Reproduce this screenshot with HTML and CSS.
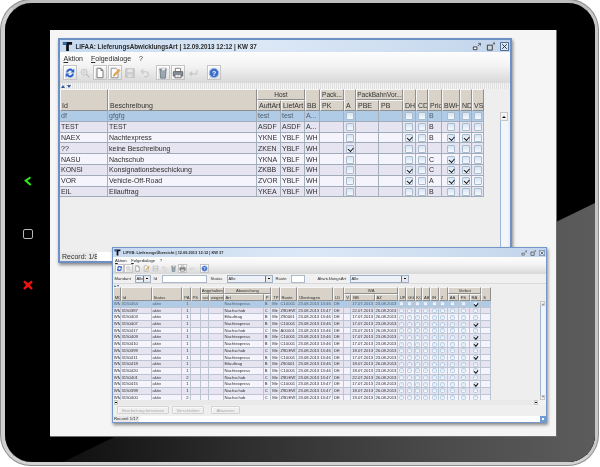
FILE: index.html
```html
<!DOCTYPE html>
<html lang="de">
<head>
<meta charset="utf-8">
<title>LIFAA</title>
<link rel="stylesheet" href="styles.css">
</head>
<body>
<svg class="sprite" xmlns="http://www.w3.org/2000/svg">
  <symbol id="i-logo" viewBox="0 0 12 12"><path d="M1 1h10v3H7.500v7H4.500V4H1z" fill="#111"/><path d="M1 1h4v3H1z" fill="#2f6fb5"/></symbol>
  <symbol id="i-refresh" viewBox="0 0 14 14"><path d="M2.500 6.500A4.500 4.500 0 0 1 10.500 3.500L12 2v4.500H7.500L9.200 5A2.800 2.800 0 0 0 4.500 6.500z" fill="#2a60c9"/><path d="M11.500 7.500A4.500 4.500 0 0 1 3.500 10.500L2 12V7.500h4.500L4.800 9A2.800 2.800 0 0 0 9.500 7.500z" fill="#2a60c9"/></symbol>
  <symbol id="i-zoom" viewBox="0 0 14 14"><circle cx="6" cy="6" r="3.500" fill="#e4e4e4" stroke="#c2c2c2"/><path d="M8.500 8.500l3.500 3.500" stroke="#c2c2c2" stroke-width="1.600"/><path d="M4.500 6h3M6 4.500v3" stroke="#cfcfcf"/></symbol>
  <symbol id="i-doc" viewBox="0 0 14 14"><path d="M3.500 1.500h4.500l2.500 2.500v8.500h-7z" fill="#fff" stroke="#666"/><path d="M8 1.500V4h2.500" fill="none" stroke="#666"/></symbol>
  <symbol id="i-edit" viewBox="0 0 14 14"><path d="M2.500 1.500h5.500l2.500 2.500v8.500h-8z" fill="#fdfdfd" stroke="#888"/><path d="M5 11l1-3 5.500-5.500 1.500 1.500-5.500 5.500z" fill="#e9b04a" stroke="#c9703c" stroke-width=".5"/></symbol>
  <symbol id="i-save" viewBox="0 0 14 14"><path d="M2 2h10v10H2z" fill="#cccccc" stroke="#bcbcbc"/><path d="M4 2.500h6v3.500H4z" fill="#e6e6e6"/><path d="M4.500 8.500h5V12h-5z" fill="#e0e0e0"/></symbol>
  <symbol id="i-undo" viewBox="0 0 14 14"><path d="M5 2.500L2.500 5.500 5.500 8M3 5.500h5a3 3 0 0 1 0 6H6" fill="none" stroke="#c8c8c8" stroke-width="1.300"/></symbol>
  <symbol id="i-trash" viewBox="0 0 14 14"><path d="M3.500 3.500h7l-.8 9.500H4.300z" fill="#9aa8b6" stroke="#6b7a7a"/><path d="M2.500 2.500h9" stroke="#666" stroke-width="1.200"/><path d="M5.500 1.200h4v3h-4z" fill="#f4f4f4" stroke="#999" stroke-width=".5"/></symbol>
  <symbol id="i-print" viewBox="0 0 14 14"><path d="M4 1.500h6v4H4z" fill="#fff" stroke="#777"/><path d="M1.500 5.500h11v5h-11z" fill="#8b949e" stroke="#5c5c5c"/><path d="M3.500 8.500h7v4h-7z" fill="#fff" stroke="#666"/><path d="M5 10h4M5 11.500h4" stroke="#aaa" stroke-width=".6"/></symbol>
  <symbol id="i-enter" viewBox="0 0 14 14"><path d="M11.500 3.500v4.500H3.500M6 5.500L3 8l3 2.500" fill="none" stroke="#c8c8c8" stroke-width="1.300"/></symbol>
  <symbol id="i-help" viewBox="0 0 14 14"><circle cx="7" cy="7" r="5.500" fill="#3a6cc9" stroke="#a9c1ea"/><text x="7" y="10" text-anchor="middle" font-family="Liberation Sans" font-size="8" font-weight="700" fill="#fff">?</text></symbol>
  <symbol id="i-min" viewBox="0 0 10 10"><path d="M1.500 5.500h4v3h-4z" fill="#fff" stroke="#333"/><path d="M6.500 4.500l2.500-2.500M7 1.500h2.500V4" fill="none" stroke="#333" stroke-width=".8"/></symbol>
  <symbol id="i-max" viewBox="0 0 10 10"><path d="M1.500 3.500h5.500v5.500H1.500z" fill="#cfd6df" stroke="#333"/><path d="M7.500 3l1.500-1.500M7.800 1h1.700v1.700" fill="none" stroke="#333" stroke-width=".8"/></symbol>
  <symbol id="i-close" viewBox="0 0 10 10"><path d="M.5.500h9v9h-9z" fill="#dbe6f3" stroke="#3c5f8c"/><path d="M2.500 2.500l5 5M7.500 2.500l-5 5" stroke="#333" stroke-width="1.100"/></symbol>
</svg>

<main class="tablet">
  <div class="bezel">
    <nav class="side">
      <svg class="side-icon" viewBox="0 0 10 10"><path d="M7 .5L1 4.500 7 9.800 8.500 8.300 4.500 4.800 8 2z" fill="#2fe01a"/></svg>
      <span class="home-btn"></span>
      <svg class="side-icon" viewBox="0 0 10 10"><path d="M1.500.500L5 3 8.500.500 9.800 2 7 5l2.800 3.200L8.300 9.800 5 7 1.700 9.800.2 8.200 3 5 .2 2z" fill="#ee1111"/></svg>
    </nav>
    <section class="screen">

      <article class="win win-a">
        <header class="titlebar">
          <svg class="logo"><use href="#i-logo"/></svg>
          <span class="title">LIFAA: LieferungsAbwicklungsArt | 12.09.2013 12:12 | KW 37</span>
          <span class="winbtns">
            <svg class="winbtn"><use href="#i-min"/></svg>
            <svg class="winbtn"><use href="#i-max"/></svg>
            <svg class="winbtn"><use href="#i-close"/></svg>
          </span>
        </header>
        <div class="chrome">
          <div class="menu"><span><u>A</u>ktion</span><span><u>F</u>olgedialoge</span><span>?</span></div>
          <div class="toolbar">
            <span class="tool raised"><svg><use href="#i-refresh"/></svg></span>
            <span class="tool"><svg><use href="#i-zoom"/></svg></span>
            <span class="tool raised"><svg><use href="#i-doc"/></svg></span>
            <span class="tool raised"><svg><use href="#i-edit"/></svg></span>
            <span class="tool"><svg><use href="#i-save"/></svg></span>
            <span class="tool"><svg><use href="#i-undo"/></svg></span>
            <span class="tool raised gap"><svg><use href="#i-trash"/></svg></span>
            <span class="tool raised"><svg><use href="#i-print"/></svg></span>
            <span class="tool"><svg><use href="#i-enter"/></svg></span>
            <span class="tool raised gap2"><svg><use href="#i-help"/></svg></span>
          </div>
        </div>
        <div class="split"><span class="up"></span><span class="down"></span></div>
        <div class="main">
          <div class="grid-wrap">
            <table class="grid">
              <colgroup>
                <col class="a1"><col class="a2"><col class="a3"><col class="a3"><col class="a4"><col class="a3"><col class="a5"><col class="a6"><col class="a3"><col class="a7"><col class="a5"><col class="a8"><col class="a9"><col class="a5"><col class="a5">
              </colgroup>
              <thead>
                <tr>
                  <th rowspan="2">Id</th><th rowspan="2">Beschreibung</th><th colspan="2" class="grp">Host</th><th rowspan="2">BB</th><th class="grp">Pack...</th><th rowspan="2">A</th><th colspan="2" class="grp">PackBahnVor...</th><th rowspan="2">DH</th><th rowspan="2">CD</th><th rowspan="2">Prio</th><th rowspan="2">BWH</th><th rowspan="2">ND</th><th rowspan="2">VS</th>
                </tr>
                <tr><th>AuftArt</th><th>LiefArt</th><th>PK</th><th>PBE</th><th>PB</th></tr>
              </thead>
              <tbody>
                <tr class="sel"><td>df<td>gfgfg<td>test<td>test<td>A...<td><td class="k"><i class="cb"></i><td><td><td class="k"><i class="cb"></i><td class="k"><i class="cb"></i><td>B<td class="k"><i class="cb"></i><td class="k"><i class="cb"></i><td class="k"><i class="cb"></i></tr>
                <tr><td>TEST<td>TEST<td>ASDF<td>ASDF<td>A...<td><td class="k"><i class="cb"></i><td><td><td class="k"><i class="cb"></i><td class="k"><i class="cb"></i><td>B<td class="k"><i class="cb"></i><td class="k"><i class="cb"></i><td class="k"><i class="cb"></i></tr>
                <tr><td>NAEX<td>Nachtexpress<td>YKNE<td>YBLF<td>WH<td><td class="k"><i class="cb"></i><td><td><td class="k"><i class="cb on"></i><td class="k"><i class="cb"></i><td>B<td class="k"><i class="cb on"></i><td class="k"><i class="cb on"></i><td class="k"><i class="cb"></i></tr>
                <tr><td>??<td>keine Beschreibung<td>ZKEN<td>YBLF<td>WH<td><td class="k"><i class="cb on"></i><td><td><td class="k"><i class="cb"></i><td class="k"><i class="cb"></i><td><td class="k"><i class="cb"></i><td class="k"><i class="cb"></i><td class="k"><i class="cb"></i></tr>
                <tr><td>NASU<td>Nachschub<td>YKNA<td>YBLF<td>WH<td><td class="k"><i class="cb"></i><td><td><td class="k"><i class="cb"></i><td class="k"><i class="cb"></i><td>C<td class="k"><i class="cb on"></i><td class="k"><i class="cb"></i><td class="k"><i class="cb"></i></tr>
                <tr><td>KONSI<td>Konsignationsbeschickung<td>ZKBB<td>YBLF<td>WH<td><td class="k"><i class="cb"></i><td><td><td class="k"><i class="cb on"></i><td class="k"><i class="cb"></i><td>C<td class="k"><i class="cb on"></i><td class="k"><i class="cb on"></i><td class="k"><i class="cb"></i></tr>
                <tr><td>VOR<td>Vehicle-Off-Road<td>ZVOR<td>YBLF<td>WH<td><td class="k"><i class="cb"></i><td><td><td class="k"><i class="cb on"></i><td class="k"><i class="cb"></i><td>A<td class="k"><i class="cb on"></i><td class="k"><i class="cb on"></i><td class="k"><i class="cb"></i></tr>
                <tr><td>EIL<td>Eilauftrag<td>YKEA<td>YBLF<td>WH<td><td class="k"><i class="cb"></i><td><td><td class="k"><i class="cb"></i><td class="k"><i class="cb"></i><td>B<td class="k"><i class="cb"></i><td class="k"><i class="cb"></i><td class="k"><i class="cb"></i></tr>
              </tbody>
            </table>
          </div>
          <div class="vscroll"><span class="arrow"></span><span class="track"></span></div>
        </div>
        <footer class="record"><span class="rec-label">Record: 1/8</span><span class="rec-field"></span></footer>
      </article>

      <article class="win win-b">
        <header class="titlebar">
          <svg class="logo"><use href="#i-logo"/></svg>
          <span class="title">LIFVB: LieferungsÜbersicht | 12.09.2013 12:12 | KW 37</span>
          <span class="winbtns">
            <svg class="winbtn"><use href="#i-min"/></svg>
            <svg class="winbtn"><use href="#i-max"/></svg>
            <svg class="winbtn"><use href="#i-close"/></svg>
          </span>
        </header>
        <div class="chrome">
          <div class="menu"><span><u>A</u>ktion</span><span><u>F</u>olgedialoge</span><span>?</span></div>
          <div class="toolbar">
            <span class="tool raised"><svg><use href="#i-refresh"/></svg></span>
            <span class="tool raised"><svg><use href="#i-zoom"/></svg></span>
            <span class="tool"><svg><use href="#i-doc"/></svg></span>
            <span class="tool"><svg><use href="#i-edit"/></svg></span>
            <span class="tool"><svg><use href="#i-save"/></svg></span>
            <span class="tool"><svg><use href="#i-undo"/></svg></span>
            <span class="tool"><svg><use href="#i-trash"/></svg></span>
            <span class="tool raised"><svg><use href="#i-print"/></svg></span>
            <span class="tool"><svg><use href="#i-enter"/></svg></span>
            <span class="tool raised gap"><svg><use href="#i-help"/></svg></span>
          </div>
        </div>
        <div class="filters">
          <label class="f-mandant">Mandant</label><span class="combo w-mandant">Alle</span>
          <label class="f-id">Id</label><span class="input w-id"></span>
          <label class="f-status">Status</label><span class="combo w-status">Alle</span>
          <label class="f-route">Route</label><span class="input w-route"></span>
          <label class="f-art">AbwicklungsArt</label><span class="combo w-art">Alle</span>
        </div>
        <div class="split"><span class="up"></span><span class="down"></span></div>
        <div class="main">
          <div class="grid-wrap">
            <table class="grid">
              <colgroup>
                <col class="b1"><col class="b2"><col class="b3"><col class="b4"><col class="b5"><col class="b4"><col class="b6"><col class="b7"><col class="b8"><col class="b4"><col class="b9"><col class="b10"><col class="b11"><col class="b12"><col class="b13"><col class="b13"><col class="b4"><col class="b4"><col class="b1"><col class="b14"><col class="b15"><col class="b16"><col class="b17"><col class="b17"><col class="b18"><col class="b16">
              </colgroup>
              <thead>
                <tr>
                  <th rowspan="2">MD</th><th rowspan="2">Id</th><th rowspan="2">Status</th><th rowspan="2">PA</th><th rowspan="2">PS</th><th colspan="2" class="grp">Angehalten</th><th colspan="2" class="grp">Abweichung</th><th rowspan="2">TP</th><th rowspan="2">Route</th><th rowspan="2">Übertragen</th><th rowspan="2">LD</th><th colspan="3" class="grp">WA</th><th rowspan="2">UP</th><th rowspan="2">GG</th><th rowspan="2">KO</th><th rowspan="2">AB</th><th rowspan="2">IR</th><th rowspan="2">Z</th><th colspan="3" class="grp">Verbot</th><th rowspan="2">S</th>
                </tr>
                <tr><th>seit</th><th>wegen</th><th>Art</th><th>P</th><th>V</th><th>BB</th><th>AZ</th><th>AA</th><th>FS</th><th>RA</th></tr>
              </thead>
              <tbody>
                <tr class="sel"><td>WM<td>3150454<td>aktiv<td class="r">1<td><td><td><td>Nachtexpress<td>B<td>Mir<td>C10001<td>23.08.2013 13:46<td>DE<td><td>17.07.2013<td>23.08.2013<td class="k"><i class="cb"></i><td class="k"><i class="cb"></i><td class="k"><i class="cb"></i><td class="k"><i class="cb"></i><td class="k"><i class="cb"></i><td class="k"><i class="cb"></i><td class="k"><i class="cb"></i><td class="k"><i class="cb"></i><td class="k"><i class="cb on"></i><td></tr>
                <tr><td>WM<td>3150387<td>aktiv<td class="r">1<td><td><td><td>Nachschub<td>C<td>Mir<td>Z9DEW1<td>23.08.2013 13:47<td>DE<td><td>22.07.2013<td>26.08.2013<td class="k"><i class="cb"></i><td class="k"><i class="cb"></i><td class="k"><i class="cb"></i><td class="k"><i class="cb"></i><td class="k"><i class="cb"></i><td class="k"><i class="cb"></i><td class="k"><i class="cb"></i><td class="k"><i class="cb"></i><td class="k"><i class="cb"></i><td></tr>
                <tr><td>WM<td>3150403<td>aktiv<td class="r">1<td><td><td><td>Eilauftrag<td>B<td>Mir<td>Z90001<td>23.08.2013 13:46<td>DE<td><td>17.07.2013<td>26.08.2013<td class="k"><i class="cb"></i><td class="k"><i class="cb"></i><td class="k"><i class="cb"></i><td class="k"><i class="cb"></i><td class="k"><i class="cb"></i><td class="k"><i class="cb"></i><td class="k"><i class="cb"></i><td class="k"><i class="cb"></i><td class="k"><i class="cb"></i><td></tr>
                <tr><td>WM<td>3150407<td>aktiv<td class="r">1<td><td><td><td>Nachtexpress<td>B<td>Mir<td>C10001<td>23.08.2013 13:46<td>DE<td><td>17.07.2013<td>23.08.2013<td class="k"><i class="cb"></i><td class="k"><i class="cb"></i><td class="k"><i class="cb"></i><td class="k"><i class="cb"></i><td class="k"><i class="cb"></i><td class="k"><i class="cb"></i><td class="k"><i class="cb"></i><td class="k"><i class="cb"></i><td class="k"><i class="cb on"></i><td></tr>
                <tr><td>WM<td>3150417<td>aktiv<td class="r">1<td><td><td><td>Nachschub<td>C<td>Mir<td>A00001<td>23.08.2013 13:46<td>DE<td><td>23.07.2013<td>26.08.2013<td class="k"><i class="cb"></i><td class="k"><i class="cb"></i><td class="k"><i class="cb"></i><td class="k"><i class="cb"></i><td class="k"><i class="cb"></i><td class="k"><i class="cb"></i><td class="k"><i class="cb"></i><td class="k"><i class="cb"></i><td class="k"><i class="cb"></i><td></tr>
                <tr><td>WM<td>3150409<td>aktiv<td class="r">1<td><td><td><td>Nachtexpress<td>B<td>Mir<td>C10001<td>23.08.2013 13:46<td>DE<td><td>17.07.2013<td>23.08.2013<td class="k"><i class="cb"></i><td class="k"><i class="cb"></i><td class="k"><i class="cb"></i><td class="k"><i class="cb"></i><td class="k"><i class="cb"></i><td class="k"><i class="cb"></i><td class="k"><i class="cb"></i><td class="k"><i class="cb"></i><td class="k"><i class="cb on"></i><td></tr>
                <tr><td>WM<td>3150410<td>aktiv<td class="r">1<td><td><td><td>Nachtexpress<td>B<td>Mir<td>C10001<td>23.08.2013 13:46<td>DE<td><td>17.07.2013<td>23.08.2013<td class="k"><i class="cb"></i><td class="k"><i class="cb"></i><td class="k"><i class="cb"></i><td class="k"><i class="cb"></i><td class="k"><i class="cb"></i><td class="k"><i class="cb"></i><td class="k"><i class="cb"></i><td class="k"><i class="cb"></i><td class="k"><i class="cb on"></i><td></tr>
                <tr><td>WM<td>3150399<td>aktiv<td class="r">1<td><td><td><td>Nachschub<td>C<td>Mir<td>Z9DEW1<td>23.08.2013 13:46<td>DE<td><td>18.07.2013<td>26.08.2013<td class="k"><i class="cb"></i><td class="k"><i class="cb"></i><td class="k"><i class="cb"></i><td class="k"><i class="cb"></i><td class="k"><i class="cb"></i><td class="k"><i class="cb"></i><td class="k"><i class="cb"></i><td class="k"><i class="cb"></i><td class="k"><i class="cb"></i><td></tr>
                <tr><td>WM<td>3150411<td>aktiv<td class="r">1<td><td><td><td>Nachtexpress<td>B<td>Mir<td>C10001<td>23.08.2013 13:46<td>DE<td><td>17.07.2013<td>23.08.2013<td class="k"><i class="cb"></i><td class="k"><i class="cb"></i><td class="k"><i class="cb"></i><td class="k"><i class="cb"></i><td class="k"><i class="cb"></i><td class="k"><i class="cb"></i><td class="k"><i class="cb"></i><td class="k"><i class="cb"></i><td class="k"><i class="cb on"></i><td></tr>
                <tr><td>WM<td>3150418<td>aktiv<td class="r">1<td><td><td><td>Eilauftrag<td>B<td>Mir<td>Z90001<td>23.08.2013 13:46<td>DE<td><td>18.07.2013<td>26.08.2013<td class="k"><i class="cb"></i><td class="k"><i class="cb"></i><td class="k"><i class="cb"></i><td class="k"><i class="cb"></i><td class="k"><i class="cb"></i><td class="k"><i class="cb"></i><td class="k"><i class="cb"></i><td class="k"><i class="cb"></i><td class="k"><i class="cb"></i><td></tr>
                <tr><td>WM<td>3150420<td>aktiv<td class="r">1<td><td><td><td>Nachtexpress<td>B<td>Mir<td>C10001<td>23.08.2013 13:46<td>DE<td><td>18.07.2013<td>23.08.2013<td class="k"><i class="cb"></i><td class="k"><i class="cb"></i><td class="k"><i class="cb"></i><td class="k"><i class="cb"></i><td class="k"><i class="cb"></i><td class="k"><i class="cb"></i><td class="k"><i class="cb"></i><td class="k"><i class="cb"></i><td class="k"><i class="cb on"></i><td></tr>
                <tr><td>WM<td>3150401<td>aktiv<td class="r">2<td><td><td><td>Nachschub<td>C<td>Mir<td>Z9DEW1<td>23.08.2013 13:47<td>DE<td><td>22.07.2013<td>26.08.2013<td class="k"><i class="cb"></i><td class="k"><i class="cb"></i><td class="k"><i class="cb"></i><td class="k"><i class="cb"></i><td class="k"><i class="cb"></i><td class="k"><i class="cb"></i><td class="k"><i class="cb"></i><td class="k"><i class="cb"></i><td class="k"><i class="cb"></i><td></tr>
                <tr><td>WM<td>3150415<td>aktiv<td class="r">1<td><td><td><td>Nachtexpress<td>B<td>Mir<td>C10001<td>23.08.2013 13:47<td>DE<td><td>17.07.2013<td>23.08.2013<td class="k"><i class="cb"></i><td class="k"><i class="cb"></i><td class="k"><i class="cb"></i><td class="k"><i class="cb"></i><td class="k"><i class="cb"></i><td class="k"><i class="cb"></i><td class="k"><i class="cb"></i><td class="k"><i class="cb"></i><td class="k"><i class="cb on"></i><td></tr>
                <tr><td>WM<td>3150398<td>aktiv<td class="r">1<td><td><td><td>Nachschub<td>C<td>Mir<td>Z9DEW1<td>23.08.2013 13:47<td>DE<td><td>18.07.2013<td>26.08.2013<td class="k"><i class="cb"></i><td class="k"><i class="cb"></i><td class="k"><i class="cb"></i><td class="k"><i class="cb"></i><td class="k"><i class="cb"></i><td class="k"><i class="cb"></i><td class="k"><i class="cb"></i><td class="k"><i class="cb"></i><td class="k"><i class="cb"></i><td></tr>
                <tr><td>WM<td>3150400<td>aktiv<td class="r">2<td><td><td><td>Nachschub<td>C<td>Mir<td>Z9DEW1<td>23.08.2013 13:47<td>DE<td><td>19.07.2013<td>26.08.2013<td class="k"><i class="cb"></i><td class="k"><i class="cb"></i><td class="k"><i class="cb"></i><td class="k"><i class="cb"></i><td class="k"><i class="cb"></i><td class="k"><i class="cb"></i><td class="k"><i class="cb"></i><td class="k"><i class="cb"></i><td class="k"><i class="cb"></i><td></tr>
              </tbody>
            </table>
          </div>
          <div class="vscroll"><span class="arrow"></span><span class="track"></span><span class="arrow down-arrow"></span></div>
        </div>
        <div class="hscroll"><span class="harrow"></span><span class="htrack"></span><span class="harrow"></span></div>
        <div class="actions">
          <button class="act act-1" disabled>Bearbeitung fortsetzen</button>
          <button class="act act-2" disabled>Verschieben</button>
          <button class="act act-3" disabled>Abweisen</button>
        </div>
        <footer class="record"><span class="rec-label">Record: 1/17</span><span class="rec-field"></span><span class="rec-icon"></span></footer>
      </article>

    </section>
  </div>
</main>
</body>
</html>
```

FILE: styles.css
```css
* { box-sizing: border-box; }
html, body { margin: 0; padding: 0; }
body { width: 600px; height: 467px; background: #fff; overflow: hidden; font-family: "Liberation Sans", Arial, sans-serif; color: #222; }
.sprite { display: none; }

/* tablet frame */
.tablet {
  width: 597px; height: 465px; margin-left: 1px;
  border-style: solid; border-width: 3px 3px 3px 4px; border-color: #bdbdbd #c8c8c8 #d2d2d2 #cfcfcf;
  border-radius: 30px;
  box-shadow: 0 0 0 1px #8d8d8d, inset 0 0 0 1px #777;
  background: #000;
}
.bezel {
  position: relative; width: 100%; height: 100%; display: flex;
  padding-top: 27px; background: #000; border-radius: 27px; overflow: hidden;
}
.bezel::before {
  content: ""; position: absolute; inset: 0;
  background: linear-gradient(90deg, #0d0d0d 8%, #2e2e2e 40%, #4c4c4c 75%, #5c5c5c 100%);
  clip-path: polygon(100% 200px, 100% 100%, 58px 100%);
}
.side { position: relative; width: 45px; height: 265px; flex: none; display: flex; flex-direction: column; align-items: center; padding: 146px 0 0 0; }
.side-icon { width: 10px; height: 10px; display: block; margin-left: 0; }
.home-btn { display: block; width: 10px; height: 10px; margin: 43px 0 41px; border: 1px solid #b7b7b7; border-radius: 2px; }

.screen { position: relative; width: 507px; height: 407px; background: #f5f5f5; border: 1px solid #6e6e6e; border-width: 0 1px 1px 0; }

/* windows on the desktop */
.win {
  position: absolute; display: flex; flex-direction: column; background: #efefef;
  box-shadow: 1px 2px 3px rgba(0,0,0,.45); overflow: hidden;
}
.win-a { left: 8px; top: 8px; width: 454px; height: 225px; border: 2px solid #6d91c4; font-size: 7px; filter: blur(.35px); }
.win-b { left: 62px; top: 217px; width: 435px; height: 176px; border: 1px solid #7497c8; font-size: 4.2px; filter: blur(.45px); }

.titlebar { display: flex; align-items: center; flex: none; background: linear-gradient(90deg, #c7daf0 0%, #dce8f6 45%, #c3d5ec 100%); }
.win-a .titlebar { height: 12px; padding: 0 1px 0 2px; }
.win-b .titlebar { height: 9px; padding: 0 1px; }
.logo { flex: none; }
.win-a .logo { width: 11px; height: 11px; margin-right: 2.500px; }
.win-b .logo { width: 7px; height: 7px; margin-right: 2px; }
.title { flex: 1; font-weight: 700; color: #2a2a2a; white-space: nowrap; }
.win-a .title { font-size: 6.300px; }
.win-b .title { font-size: 3.900px; }
.winbtns { display: flex; flex: none; }
.win-a .winbtns { gap: 5px; }
.win-b .winbtns { gap: 3px; }
.win-a .winbtn { width: 9px; height: 9px; }
.win-b .winbtn { width: 6px; height: 6px; }

.chrome { flex: none; background: linear-gradient(#fdfdfd, #f3f3f3 45%, #d8d8d8); }
.menu { display: flex; align-items: center; color: #2b2b2b; }
.win-a .menu { height: 12px; gap: 8px; padding-left: 3.500px; }
.win-b .menu { height: 6px; gap: 4.500px; padding-left: 2px; }
.toolbar { display: flex; align-items: flex-start; }
.win-a .toolbar { height: 19px; gap: 1px; padding: 1px 0 0 2.500px; }
.win-b .toolbar { height: 11px; padding: 1px 0 0 2px; }
.tool { display: flex; align-items: center; justify-content: center; flex: none; }
.win-a .tool { width: 14px; height: 15px; }
.win-b .tool { width: 9px; height: 9px; }
.tool svg { display: block; }
.win-a .tool svg { width: 12px; height: 12px; }
.win-b .tool svg { width: 7px; height: 7px; }
.tool.raised { border: 1px solid #c4c4c4; background: linear-gradient(#f8f8f8, #e2e2e2); box-shadow: inset 1px 1px 0 #fff; }
.win-a .tool.gap { margin-left: 3px; }
.win-a .tool.gap2 { margin-left: 6px; }
.win-b .tool.gap { margin-left: 4px; }

.split { flex: none; display: flex; align-items: center; gap: 1px; background: repeating-linear-gradient(90deg, #dfdfdf 0 1px, #f4f4f4 1px 2px); }
.win-a .split { height: 6px; padding-left: 1px; }
.win-b .split { height: 3px; padding-left: 1px; background: #efefef; }
.up, .down { width: 0; height: 0; border-style: solid; border-color: transparent; }
.win-a .up { border-width: 0 2.500px 3px; border-bottom-color: #2d5da8; }
.win-a .down { border-width: 3px 2.500px 0; border-top-color: #2d5da8; margin-left: 1px; }
.win-b .up { border-width: 0 1.500px 2px; border-bottom-color: #2d5da8; }
.win-b .down { border-width: 2px 1.500px 0; border-top-color: #2d5da8; }

.main { flex: 1; min-height: 0; display: flex; background: #eeeeee; overflow: hidden; }
.grid-wrap { flex: 1; min-width: 0; overflow: hidden; }
.grid { table-layout: fixed; border-collapse: separate; border-spacing: 0; }
.win-a .grid { width: 424px; }
.win-b .grid { width: 377.7px; }
.grid th, .grid td { padding: 0; overflow: hidden; white-space: nowrap; text-align: left; font-weight: 400; }
.grid th { background: #d8d2c8; color: #333; vertical-align: bottom; border: solid #8e8e8e; border-width: 1px; border-color: #f6f6f6 #8f8f8f #8f8f8f #f6f6f6; }
.grid th.grp { text-align: center; vertical-align: middle; }
.grid td { background: #f5f4fd; color: #2f2f2f; border-right: 1px solid #a5afbc; border-bottom: 1px solid #a1acba; vertical-align: middle; }
.grid tbody tr:nth-child(even) td { background: #e6e4f0; }
.grid tbody tr.sel td { background: #afcbe6; color: #51606f; }
.win-a th { height: 11px; line-height: 9px; }
.win-a td { height: 10.8px; line-height: 9px; }
.win-b th { height: 7px; line-height: 5px; }
.win-b td { height: 6.7px; line-height: 5.6px; border-color: #bcc5d1; }
.win-a .grid td, .win-a .grid th { padding-left: 1px; }
.win-b .grid td, .win-b .grid th { padding-left: .8px; }
.win-a .grid th.grp { padding-left: 0; font-size: 6.500px; }
.win-b .grid th.grp { padding-left: 0; }
.grid td.r { text-align: right; padding-right: 1px; }
.grid td.k { padding: 0; text-align: center; }

.cb { display: inline-block; position: relative; vertical-align: middle; background: linear-gradient(#d7e4f2, #f6f9fd); border: 1px solid #a8bcd0; border-radius: 1px; }
.win-a .cb { width: 8px; height: 8px; }
.win-b .cb { width: 5px; height: 5px; border-width: .6px; border-color: #b8cee4; border-radius: 1.500px; }
.cb.on::after { content: ""; position: absolute; transform: rotate(-50deg); border: solid #111; }
.win-a .cb.on::after { left: 1.200px; top: 1px; width: 4px; height: 2.500px; border-width: 0 0 1.300px 1.300px; }
.win-b .cb.on::after { left: .7px; top: .4px; width: 2.600px; height: 1.600px; border-width: 0 0 .8px .8px; }

.a1 { width: 48px; } .a2 { width: 149px; } .a3 { width: 24px; } .a4 { width: 15px; } .a5 { width: 12px; } .a6 { width: 23px; } .a7 { width: 13px; } .a8 { width: 14px; } .a9 { width: 18px; }
.b1 { width: 7.7px; } .b2 { width: 31px; } .b3 { width: 30.7px; } .b4 { width: 8.3px; } .b5 { width: 10px; } .b6 { width: 14.7px; } .b7 { width: 40.3px; } .b8 { width: 7.4px; } .b9 { width: 17.7px; } .b10 { width: 35.8px; } .b11 { width: 11.2px; } .b12 { width: 7px; } .b13 { width: 23.3px; } .b14 { width: 8px; } .b15 { width: 8.6px; } .b16 { width: 9.2px; } .b17 { width: 10.9px; } .b18 { width: 11.7px; }

.vscroll { flex: none; display: flex; flex-direction: column; }
.win-a .vscroll { width: 8px; margin: 23px 2px 0 0; }
.win-b .vscroll { width: 5px; margin: 14px 1px 0 0; }
.arrow { flex: none; display: block; position: relative; background: #f3f3f3; border: 1px solid #c7c7c7; }
.win-a .arrow { height: 9px; }
.win-b .arrow { height: 5px; border-width: .5px; }
.arrow::after { content: ""; position: absolute; left: 50%; top: 50%; transform: translate(-50%, -50%); border-style: solid; border-color: transparent transparent #111; }
.win-a .arrow::after { border-width: 0 2px 2.500px; }
.win-b .arrow::after { border-width: 0 1px 1.500px; }
.win-b .down-arrow::after { border-color: #111 transparent transparent; border-width: 1.500px 1px 0; }
.track { flex: 1; display: block; background: #f2f5fa; border-left: 1px solid #9db5d5; }

.filters { flex: none; height: 10px; display: flex; align-items: center; background: #f0f0f0; border-bottom: 1px solid #d9d9d9; padding-left: 1.500px; }
.filters label { color: #333; flex: none; }
.f-mandant { width: 20px; }
.f-id { width: 8px; margin-left: 3px; }
.f-status { width: 16px; margin-left: 4px; }
.f-route { width: 15px; margin-left: 3px; }
.f-art { width: 32px; margin-left: 13px; white-space: nowrap; }
.combo { height: 8px; flex: none; position: relative; display: flex; align-items: center; padding-left: 1px; background: #eef2f8; border: 1px solid #9fb0c6; }
.combo::after { content: ""; position: absolute; right: 0; top: 0; bottom: 0; width: 5.500px; background: #e8e8e8 linear-gradient(#111,#111) center / 2px 1.200px no-repeat; border-left: .5px solid #777; }
.input { height: 8px; flex: none; background: #fff; border: 1px solid #aab8ca; }
.w-mandant { width: 16px; }
.w-id { width: 45px; }
.w-status { width: 46px; }
.w-route { width: 14px; }
.w-art { width: 59px; }

.hscroll { flex: none; height: 5px; display: flex; background: #f3f3f3; padding: 0 8px 0 1px; }
.harrow { flex: none; width: 4px; border: .5px solid #c7c7c7; background: radial-gradient(circle, #111 0 .8px, #f3f3f3 1px); }
.htrack { flex: 1; background: #e9e9e9; }
.actions { flex: none; height: 11px; display: flex; align-items: center; background: #efefef; padding-left: 4px; }
.act { height: 8.500px; padding: 0; flex: none; font: 4.200px "Liberation Sans", Arial, sans-serif; color: #a9a9a9; background: #efefef; border: 1px solid #d2d2d2; border-radius: 1px; box-shadow: inset 1px 1px 0 #fafafa; }
.act-1 { width: 52px; }
.act-2 { width: 32px; margin-left: 3px; }
.act-3 { width: 29px; margin-left: 7px; }

.record { flex: none; display: flex; align-items: stretch; position: relative; background: #e8e8e8; }
.win-a .record { height: 9px; padding-left: 2px; }
.win-b .record { height: 6.500px; padding-left: 1px; }
.rec-label { flex: none; display: flex; align-items: center; color: #2f2f2f; white-space: nowrap; }
.win-a .rec-label { width: 35px; }
.win-b .rec-label { width: 24.5px; }
.rec-field { flex: 1; background: #fff; }
.rec-icon { position: absolute; right: 0; bottom: 0; width: 6px; height: 6px; background: radial-gradient(circle, #fff 0 1.200px, #6f9bd6 1.500px); }
```
